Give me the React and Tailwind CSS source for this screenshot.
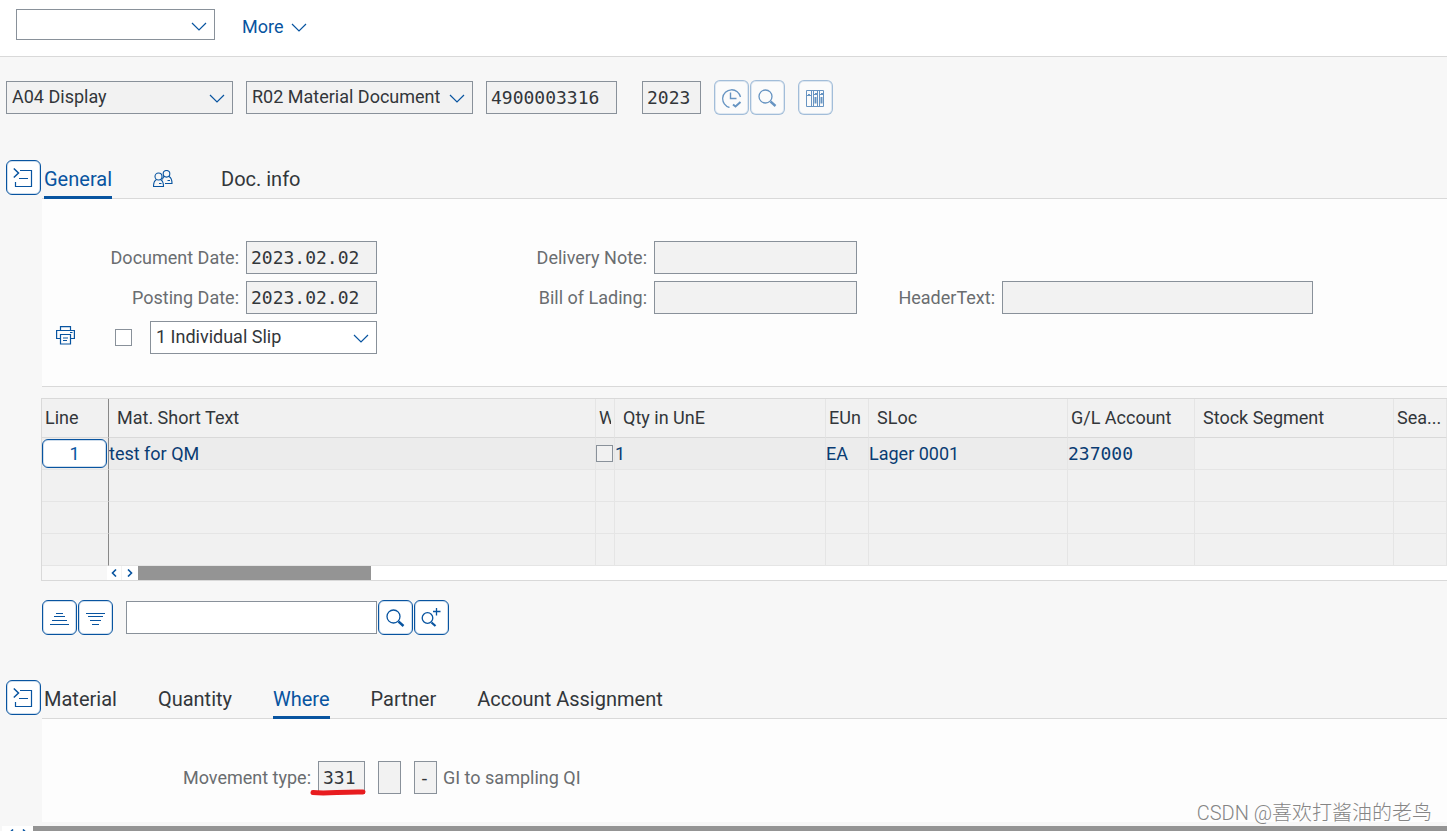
import { useState } from "react";

const columns = [
  { label: "Line", width: "w-[67px]", pad: "pl-[3px]" },
  { label: "Mat. Short Text", width: "w-[487px]", pad: "pl-2" },
  { label: "W", width: "w-[19px]", pad: "px-[3px]" },
  { label: "Qty in UnE", width: "w-[211px]", pad: "pl-2" },
  { label: "EUn", width: "w-[43px]", pad: "pl-[3px]" },
  { label: "SLoc", width: "w-[199px]", pad: "pl-2" },
  { label: "G/L Account", width: "w-[127px]", pad: "pl-[3px]" },
  { label: "Stock Segment", width: "w-[199px]", pad: "pl-2" },
  { label: "Sea...", width: "w-auto", pad: "pl-[3px]" },
];

const emptyRows = [2, 3, 4];

function Icon({ children, className = "" }) {
  return (
    <svg viewBox="0 0 21 21" className={`w-[21px] h-[21px] ${className}`} fill="none" stroke="currentColor" aria-hidden="true">
      {children}
    </svg>
  );
}

function Chevron({ className = "" }) {
  return (
    <svg viewBox="0 0 16 9" className={`w-4 h-[9px] ${className}`} fill="none" stroke="#0854a0" strokeWidth="1.2" aria-hidden="true">
      <path d="M1 1L8 8L15 1" />
    </svg>
  );
}

function SearchIcon() {
  return (
    <Icon>
      <circle cx="8.5" cy="9.5" r="6.5" strokeWidth="1.3" />
      <path d="M13.5 14.5L18.5 19" strokeWidth="2.4" />
    </Icon>
  );
}

function IconButton({ label, disabled, children }) {
  return (
    <button
      type="button"
      aria-label={label}
      disabled={disabled}
      className="w-[35px] h-[35px] shrink-0 flex items-center justify-center bg-white border border-[#0854a0] rounded-md text-[#0854a0] ring-1 ring-inset ring-[#0854a0]/20 disabled:opacity-60 disabled:border-[#0854a0]/60"
    >
      {children}
    </button>
  );
}

function SelectBox({ label, options, width, height = "h-[33px]", bg = "bg-[#f2f2f2]" }) {
  return (
    <div className={`relative ${width}`}>
      <select
        aria-label={label}
        className={`block w-full ${height} ${bg} appearance-none border border-[#89919a] pl-[5px] pr-8 pb-[2px] text-lg leading-6 text-[#32363a] focus:outline-none`}
      >
        {options.map((o) => (
          <option key={o}>{o}</option>
        ))}
      </select>
      <Chevron className="absolute right-2 top-[13px] pointer-events-none" />
    </div>
  );
}

function Field({ id, label, value = "", width = "w-full" }) {
  return (
    <input
      id={id}
      aria-label={label}
      type="text"
      readOnly
      defaultValue={value}
      className={`${width} h-[33px] bg-[#f2f2f2] border border-[#89919a] px-1 text-lg text-[#32363a] focus:outline-none font-['DejaVu_Sans_Mono',monospace]`}
    />
  );
}

function Label({ htmlFor, children, className = "" }) {
  return (
    <label htmlFor={htmlFor} className={`pt-px text-right text-lg leading-8 text-[#6a6d70] whitespace-nowrap ${className}`}>
      {children}
    </label>
  );
}

function PeopleIcon() {
  return (
    <svg viewBox="0 0 20 18" className="w-5 h-[18px]" fill="none" stroke="#0854a0" strokeWidth="1.1" aria-hidden="true">
      <circle cx="5.5" cy="6.5" r="3.5" />
      <path d="M3.5 9.5C1.5 10.5 .5 12.5 .5 16.5H10.5C10.5 12.5 9.5 10.5 7.5 9.5M6 13.5H8.5" />
      <circle cx="13.5" cy="3.8" r="3.3" />
      <path d="M11 6.5C10 7.5 9.5 8 9.5 9.5M16 6.5C18 7.5 19 9.5 19 13.5H12M14.5 10.5H17" />
    </svg>
  );
}

function TabSection({ tabs, initial, children }) {
  const [active, setActive] = useState(initial);

  return (
    <section className="flex">
      <div className="w-[42px] shrink-0 pl-[6px]">
        <IconButton label="Toggle section">
          <Icon>
            <path d="M.8 1.5L5.5 6L.8 10.5" strokeWidth="1.5" />
            <path d="M7 3.5H18.5V19.5H2.5V15M6 11.5H15" strokeWidth="1.2" />
          </Icon>
        </IconButton>
      </div>
      <div className="flex-1 min-w-0">
        <div role="tablist" className="flex gap-[41px] h-[39px] pl-[2px] border-b border-[#d9d9d9]">
          {tabs.map((tab) => (
            <button
              key={tab.name}
              type="button"
              role="tab"
              aria-label={tab.name}
              aria-selected={active === tab.name}
              onClick={() => setActive(tab.name)}
              className={`-mb-px pt-[2px] border-b-[3px] text-xl whitespace-nowrap ${tab.icon ? "w-[27px]" : ""} ${active === tab.name ? "border-[#0854a0] text-[#0854a0]" : "border-transparent text-[#32363a]"}`}
            >
              {tab.icon || tab.name}
            </button>
          ))}
        </div>
        {children}
      </div>
    </section>
  );
}

function ItemsTable() {
  const cell = "h-8 p-0 border-b border-r border-[#e5e5e5] whitespace-nowrap overflow-hidden";
  const lineCell = "h-8 p-0 border-b border-b-[#e5e5e5] border-r border-r-[#888]";

  return (
    <div className="ml-[41px] border-y border-l border-[#d9d9d9]">
      <table className="w-full table-fixed border-separate border-spacing-0 bg-[#f1f1f1] text-lg leading-6">
        <thead>
          <tr>
            {columns.map((col, i) => (
              <th
                key={col.label}
                scope="col"
                className={`${col.width} ${col.pad} h-[39px] py-0 text-left font-normal text-[#32363a] whitespace-nowrap border-b border-b-[#d9d9d9] border-r ${i === 0 ? "border-r-[#888]" : "border-r-[#e5e5e5]"}`}
              >
                <span className="block overflow-hidden">{col.label}</span>
              </th>
            ))}
          </tr>
        </thead>
        <tbody className="text-[#0a3c73]">
          <tr className="bg-[#ececec]">
            <td className={lineCell}>
              <button type="button" className="block w-[65px] h-[29px] bg-white border border-[#0854a0] rounded-md ring-1 ring-inset ring-[#0854a0]/20 text-[#0854a0]">
                1
              </button>
            </td>
            <td className={cell}>test for QM</td>
            <td className={cell}>
              <input type="checkbox" aria-label="W" className="block w-[17px] h-[17px] appearance-none border border-[#89919a] bg-[#f1f1f1]" />
            </td>
            <td className={cell}>1</td>
            <td className={cell}>EA</td>
            <td className={cell}>Lager 0001</td>
            <td className={`${cell} font-['DejaVu_Sans_Mono',monospace]`}>237000</td>
            <td className={`${cell} bg-[#f1f1f1]`}></td>
            <td className={`${cell} bg-[#f1f1f1]`}></td>
          </tr>
          {emptyRows.map((row) => (
            <tr key={row}>
              {columns.map((col, i) => (
                <td key={col.label} className={i === 0 ? lineCell : cell}></td>
              ))}
            </tr>
          ))}
        </tbody>
      </table>
      <div className="flex h-[14px] pl-[65px]">
        <div className="flex flex-1 bg-white text-[#0854a0]">
          <button type="button" aria-label="Scroll left" className="w-[15px] flex items-center justify-center border-r border-[#f2f2f2]">
            <svg viewBox="0 0 6 8" className="w-[6px] h-2" fill="none" stroke="currentColor" strokeWidth="1.6" aria-hidden="true">
              <path d="M5 .5L1.5 4L5 7.5" />
            </svg>
          </button>
          <button type="button" aria-label="Scroll right" className="w-[15px] mr-px flex items-center justify-center">
            <svg viewBox="0 0 6 8" className="w-[6px] h-2" fill="none" stroke="currentColor" strokeWidth="1.6" aria-hidden="true">
              <path d="M1 .5L4.5 4L1 7.5" />
            </svg>
          </button>
          <div className="w-[233px] bg-[#949494]"></div>
        </div>
      </div>
    </div>
  );
}

export default function App() {
  const headerTabs = [{ name: "General" }, { name: "Partners", icon: <PeopleIcon /> }, { name: "Doc. info" }];
  const itemTabs = [{ name: "Material" }, { name: "Quantity" }, { name: "Where" }, { name: "Partner" }, { name: "Account Assignment" }];

  return (
    <div className="relative h-screen overflow-hidden bg-[#f7f7f7] font-['Roboto','Noto_Sans_CJK_SC',sans-serif] text-[#32363a]">
      <header className="flex items-start gap-[27px] h-[57px] pl-4 pt-[9px] bg-white border-b border-[#d9d9d9]">
        <SelectBox label="Command" options={[""]} width="w-[199px]" height="h-[31px]" bg="bg-white" />
        <button type="button" className="flex items-center gap-2 h-9 text-lg text-[#0854a0]">
          More
          <Chevron />
        </button>
      </header>

      <div className="flex items-center pl-[6px] pt-[23px] gap-[13px]">
        <SelectBox label="Action" options={["A04 Display"]} width="w-[227px]" />
        <SelectBox label="Reference document" options={["R02 Material Document"]} width="w-[227px]" />
        <Field label="Material document" value="4900003316" width="w-[131px]" />
        <div className="pl-3">
          <Field label="Year" value="2023" width="w-[59px]" />
        </div>
        <div className="flex gap-px">
          <IconButton label="Execute" disabled>
            <Icon>
              <path d="M8.5 20.5A9 9 0 1 1 19.5 10" strokeWidth="1.3" />
              <path d="M9.5 5.5V11.5H15.5" strokeWidth="1.4" />
              <path d="M12 17.5L14.5 19.5L19.5 15" strokeWidth="2" />
            </Icon>
          </IconButton>
          <IconButton label="Find" disabled>
            <SearchIcon />
          </IconButton>
        </div>
        <IconButton label="Overview" disabled>
          <Icon>
            <path d="M1.5 3.5H18.5V19.5H1.5ZM6.5 3.5V19.5M8.5 3.5V19.5M12.5 3.5V19.5M14.5 3.5V19.5" />
            <path d="M1.5 8.5H6.5M3 7.5H5M8.5 7.5H12.5M10 6.5H12M14.5 7.5H18.5M16 6.5H18" />
            <path d="M10.5 10V16.5M16.5 10V16.5" strokeWidth="2" />
          </Icon>
        </IconButton>
      </div>

      <main className="pt-[45px]">
        <TabSection tabs={headerTabs} initial="General">
          <div className="grid grid-cols-[197px_131px_263px_203px_131px_311px] gap-[7px] pt-[42px] pb-8 bg-[#fdfdfd] border-b border-[#d9d9d9]">
            <Label htmlFor="docDate">Document Date:</Label>
            <Field id="docDate" value="2023.02.02" />
            <Label htmlFor="deliveryNote">Delivery Note:</Label>
            <Field id="deliveryNote" />
            <Label htmlFor="postingDate" className="col-start-1">Posting Date:</Label>
            <Field id="postingDate" value="2023.02.02" />
            <Label htmlFor="billOfLading">Bill of Lading:</Label>
            <Field id="billOfLading" />
            <Label htmlFor="headerText">HeaderText:</Label>
            <Field id="headerText" />
            <div className="col-start-1 col-span-2 flex items-center justify-end">
              <button type="button" aria-label="Print" className="mr-10 pb-1 text-[#0854a0]">
                <svg viewBox="0 0 19 19" className="block w-[19px] h-[19px]" fill="none" stroke="currentColor" strokeWidth="1.2" aria-hidden="true">
                  <path d="M4.5 4V.6H14.5V4M4 12.5H.6V4.5H18.4V12.5H15M14 6.5H16.5" />
                  <path d="M4.5 8.5H14.5V18H4.5ZM7 12H12M7 14.5H11" />
                </svg>
              </button>
              <input type="checkbox" aria-label="Print slip" className="w-[17px] h-[17px] mr-[18px] appearance-none border border-[#89919a] bg-white" />
              <SelectBox label="Slip" options={["1 Individual Slip"]} width="w-[227px]" bg="bg-white" />
            </div>
          </div>
        </TabSection>

        <div className="pt-[11px]">
          <ItemsTable />
        </div>

        <div className="flex items-center gap-px pl-[42px] pt-[19px] pb-[45px]">
          <IconButton label="Sort ascending">
            <Icon>
              <path d="M7 6.5H14M5 9.5H16M3 13.5H18M1 17.5H20" strokeWidth="1.2" />
            </Icon>
          </IconButton>
          <IconButton label="Sort descending">
            <Icon>
              <path d="M1 6.5H20M3 9.5H18M5 13.5H16M7 17.5H14" strokeWidth="1.2" />
            </Icon>
          </IconButton>
          <input type="text" aria-label="Search items" className="w-[251px] h-[33px] ml-3 px-1 bg-white border border-[#89919a] text-lg focus:outline-none" />
          <IconButton label="Find">
            <SearchIcon />
          </IconButton>
          <IconButton label="Find next">
            <Icon>
              <circle cx="6.5" cy="11" r="5.3" strokeWidth="1.3" />
              <path d="M10.5 15.5L14.5 19" strokeWidth="2.2" />
              <path d="M15.5 1V8.5M12 4.5H19.5" strokeWidth="1.3" />
            </Icon>
          </IconButton>
        </div>

        <TabSection tabs={itemTabs} initial="Where">
          <div className="flex pt-[42px] pb-7 bg-[#fdfdfd]">
            <Label htmlFor="movementType" className="w-[269px]">Movement type:</Label>
            <div className="relative flex ml-[7px] mr-[13px]">
              <Field id="movementType" value="331" width="w-[47px]" />
              <svg viewBox="0 0 58 8" className="absolute -left-2 -bottom-[2px] w-[58px] h-2" fill="none" stroke="#e81c1f" strokeWidth="5" strokeLinecap="round" aria-hidden="true">
                <path d="M3 4.5C18 6 30 3.5 53 4" />
              </svg>
            </div>
            <div className="flex gap-[13px] mr-[6px]">
              <Field label="Special stock" width="w-[23px]" />
              <Field label="Debit or credit" value="-" width="w-[23px]" />
            </div>
            <span className="pt-px text-lg leading-8 text-[#6a6d70]">GI to sampling QI</span>
          </div>
        </TabSection>
      </main>

      <div className="flex h-[14px] mt-1 pl-[2px]">
        <div className="flex items-center gap-2 w-[31px] pl-[6px] bg-white text-[#0854a0]">
          <svg viewBox="0 0 6 8" className="w-[6px] h-2" fill="none" stroke="currentColor" strokeWidth="1.6" aria-hidden="true">
            <path d="M5 .5L1.5 4L5 7.5" />
          </svg>
          <svg viewBox="0 0 6 8" className="w-[6px] h-2" fill="none" stroke="currentColor" strokeWidth="1.6" aria-hidden="true">
            <path d="M1 .5L4.5 4L1 7.5" />
          </svg>
        </div>
        <div className="flex-1 bg-[#949494]"></div>
      </div>

      <p className="absolute right-[15px] bottom-1 text-xl leading-7 font-light text-[#858585]">CSDN @喜欢打酱油的老鸟</p>
    </div>
  );
}
